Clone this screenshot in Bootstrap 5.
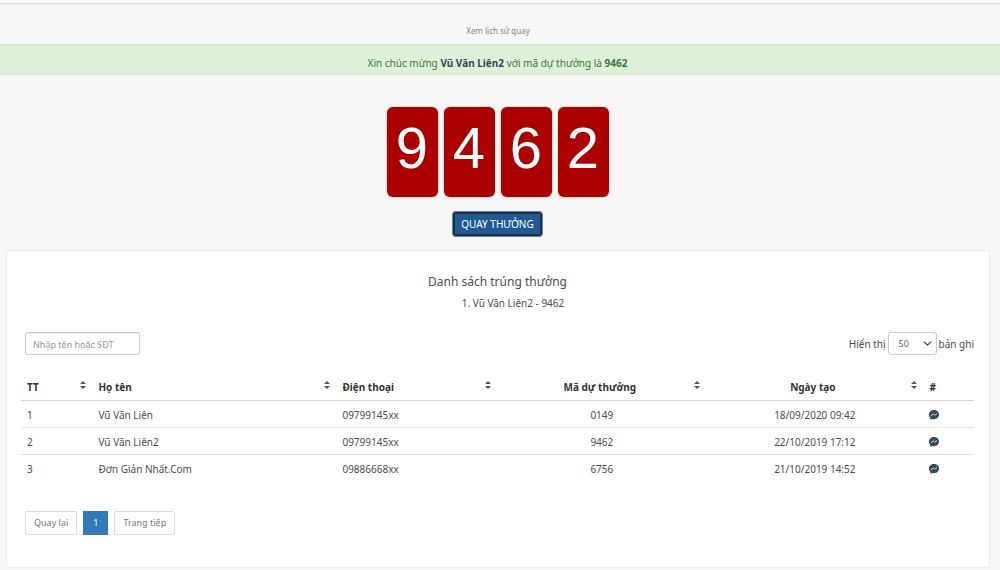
<!DOCTYPE html>
<html lang="vi">
<head>
<meta charset="utf-8">
<meta name="viewport" content="width=device-width, initial-scale=1">
<title>Quay thưởng</title>
<link href="https://cdn.jsdelivr.net/npm/bootstrap@5.3.0/dist/css/bootstrap.min.css" rel="stylesheet">
<style>
body{font-family:"Noto Sans","Open Sans",sans-serif;font-size:10px;line-height:16px;color:#4d4d4d;background:#f7f7f7}
.topbar{height:4px;background:#fff;border-bottom:1px solid #d9dadd}
.history{font-size:8px;color:#858585;height:40px;padding-top:19px}
.win{background:#dff0d8;border:1px solid #d6e9c6;border-width:1px 0;border-radius:0;color:#3c763d;padding:10px 5px 3px 0}
.win a{color:#34495e}
.reels{gap:6px;padding:32px 5px 0 0}
.digit{width:51px;height:90px;border-radius:6px;background:#a00;color:#fff;font:58px/82px "Liberation Sans",Arial,sans-serif;box-shadow:0 0 2px #a006}
.spin{margin:15px 5px 14px 0;padding:3px 7px;font-size:10px;line-height:16px;border:1px solid #222d38;border-radius:2px;background:#1f5a94;color:#fff;outline:1px solid #5d8ab5;box-shadow:inset 0 0 0 1px #222d38}
.spin:hover{background:#1f5a94;color:#fff}
.panel{margin:0 10px 0 6px;border:1px solid #ededed;background:#fff;padding:20px 15px 32px 14px}
.panel h1{font-size:12px;line-height:22px;font-weight:400;margin:0}
.winners{line-height:16px;padding-left:31px;padding-top:2px}
.tools{padding:21px 0 0 4px}
.tools .form-control{width:115px;height:23px;font-size:9px;padding:3px 7px 1px;border:1px solid #ccc;border-radius:2px;box-shadow:inset 0 1px 1px #0001}
.tools .form-control::placeholder{color:#999}
.tools label{gap:2px}
.tools .form-select{width:49px;height:23px;font-size:9px;line-height:16px;padding:3px 16px 2px 10px;border:1px solid #ccc;border-radius:3px;color:#666;background-position:right 4px center;background-size:9px}
.prizes{table-layout:fixed;margin:18px 0 0;--bs-table-bg:transparent;color:#4d4d4d;border-color:#e3e3e3}
.prizes th,.prizes td{padding:5px 6px;color:#4d4d4d;line-height:16px}
.prizes td{padding:6px 6px 4px}
.prizes th{color:#333;font-weight:700;border-bottom-color:#d5d5d5;height:27px}
.prizes th.sortable{padding-right:10px;background:no-repeat right 6px top 8px/6px 8px url("data:image/svg+xml,%3Csvg xmlns='http://www.w3.org/2000/svg' viewBox='0 0 6 8'%3E%3Cpath fill='%23555' d='M0 3L3 0L6 3ZM0 5H6L3 8Z'/%3E%3C/svg%3E")}
.prizes a{color:#34495e;display:block;width:10px}
.prizes svg{display:block}
.c-no{width:7.5%}.c-name{width:25.6%}.c-phone{width:16.9%}.c-code{width:21.9%}.c-date{width:22.8%}
.pager{gap:6px;margin:29px 0 0 4px}
.pager .page-item .page-link{font-size:9px;line-height:16px;padding:3px 8px;height:24px;border-color:#ddd;color:#777;margin:0}
.pager .page-item:first-child .page-link{border-radius:2px 0 0 2px}
.pager .page-item:last-child .page-link{border-radius:0 2px 2px 0}
.pager .page-item.active .page-link{background:#337ab7;border-color:#337ab7;color:#fff;border-radius:0;padding:3px 9px}
</style>
</head>
<body>
<header class="topbar"></header>
<main>
  <div class="history text-center pe-1"><a href="#" class="text-reset text-decoration-none">Xem lịch sử quay</a></div>
  <div class="alert win text-center mb-0" role="alert">Xin chúc mừng <a href="#" class="fw-bold text-decoration-none">Vũ Văn Liên2</a> với mã dự thưởng là <strong>9462</strong></div>
  <div class="reels d-flex justify-content-center text-center">
    <div class="digit">9</div><div class="digit">4</div><div class="digit">6</div><div class="digit">2</div>
  </div>
  <div class="text-center d-flex justify-content-center"><button type="button" class="btn spin">QUAY THƯỞNG</button></div>
  <section class="panel">
    <h1 class="text-center">Danh sách trúng thưởng</h1>
    <div class="winners text-center">1. Vũ Văn Liên2 - 9462</div>
    <div class="tools d-flex justify-content-between align-items-center">
      <input type="text" class="form-control" placeholder="Nhập tên hoặc SĐT" aria-label="Nhập tên hoặc SĐT">
      <label class="d-flex align-items-center" for="size"><span>Hiển thị</span>
        <select id="size" class="form-select"><option>50</option><option>100</option></select>
        <span>bản ghi</span></label>
    </div>
    <table class="table prizes">
      <thead><tr>
        <th class="sortable c-no">TT</th><th class="sortable c-name">Họ tên</th><th class="sortable c-phone">Điện thoại</th><th class="sortable c-code text-center">Mã dự thưởng</th><th class="sortable c-date text-center">Ngày tạo</th><th>#</th>
      </tr></thead>
      <tbody>
        <tr><td>1</td><td>Vũ Văn Liên</td><td>09799145xx</td><td class="text-center">0149</td><td class="text-center">18/09/2020 09:42</td><td><a href="#" aria-label="Messenger"><svg width="10" height="16" viewBox="0 0 10 16"><path fill="currentColor" d="M5 3C2.200 3 0 4.900 0 7.500C0 9 .6 10.200 1.400 11V13L3.200 12C3.800 12.100 4.300 12.200 5 12.200C7.800 12.200 10 10.200 10 7.500S7.800 3 5 3Z"/><path d="M2 9L4.200 6.800L5.700 8.200L8 6.600" fill="none" stroke="#fff" stroke-width=".8"/></svg></a></td></tr>
        <tr><td>2</td><td>Vũ Văn Liên2</td><td>09799145xx</td><td class="text-center">9462</td><td class="text-center">22/10/2019 17:12</td><td><a href="#" aria-label="Messenger"><svg width="10" height="16" viewBox="0 0 10 16"><path fill="currentColor" d="M5 3C2.200 3 0 4.900 0 7.500C0 9 .6 10.200 1.400 11V13L3.200 12C3.800 12.100 4.300 12.200 5 12.200C7.800 12.200 10 10.200 10 7.500S7.800 3 5 3Z"/><path d="M2 9L4.200 6.800L5.700 8.200L8 6.600" fill="none" stroke="#fff" stroke-width=".8"/></svg></a></td></tr>
        <tr class="border-white"><td>3</td><td>Đơn Giản Nhất.Com</td><td>09886668xx</td><td class="text-center">6756</td><td class="text-center">21/10/2019 14:52</td><td><a href="#" aria-label="Messenger"><svg width="10" height="16" viewBox="0 0 10 16"><path fill="currentColor" d="M5 3C2.200 3 0 4.900 0 7.500C0 9 .6 10.200 1.400 11V13L3.200 12C3.800 12.100 4.300 12.200 5 12.200C7.800 12.200 10 10.200 10 7.500S7.800 3 5 3Z"/><path d="M2 9L4.200 6.800L5.700 8.200L8 6.600" fill="none" stroke="#fff" stroke-width=".8"/></svg></a></td></tr>
      </tbody>
    </table>
    <nav aria-label="Phân trang"><ul class="pagination pager mb-0">
      <li class="page-item"><a class="page-link" href="#">Quay lại</a></li>
      <li class="page-item active"><a class="page-link" href="#">1</a></li>
      <li class="page-item"><a class="page-link" href="#">Trang tiếp</a></li>
    </ul></nav>
  </section>
</main>
<script src="https://cdn.jsdelivr.net/npm/bootstrap@5.3.0/dist/js/bootstrap.bundle.min.js"></script>
</body>
</html>
